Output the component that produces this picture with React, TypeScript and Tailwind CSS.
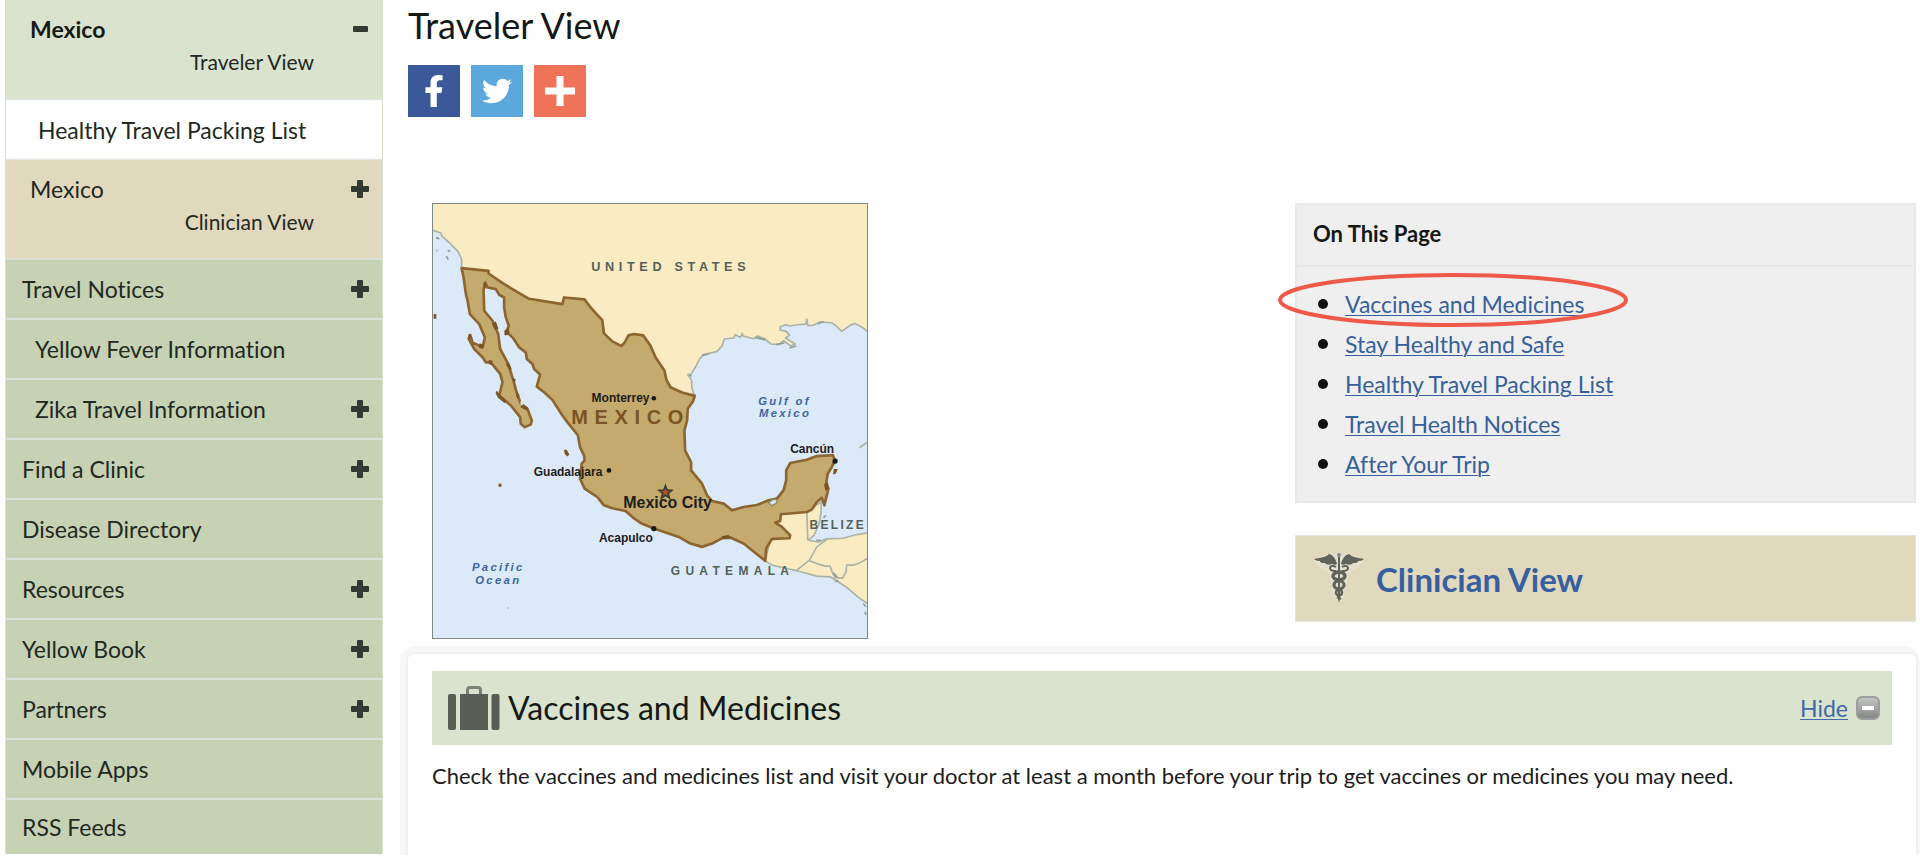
import React from "react";
import { FaFacebookF, FaTwitter } from "react-icons/fa";

type NavItem = { label: string; nested?: boolean; expandable?: boolean };

const navItems: NavItem[] = [
  { label: "Travel Notices", expandable: true },
  { label: "Yellow Fever Information", nested: true },
  { label: "Zika Travel Information", nested: true, expandable: true },
  { label: "Find a Clinic", expandable: true },
  { label: "Disease Directory" },
  { label: "Resources", expandable: true },
  { label: "Yellow Book", expandable: true },
  { label: "Partners", expandable: true },
  { label: "Mobile Apps" },
  { label: "RSS Feeds" },
];

const pageLinks = [
  "Vaccines and Medicines",
  "Stay Healthy and Safe",
  "Healthy Travel Packing List",
  "Travel Health Notices",
  "After Your Trip",
];

function ToggleButton({ open, label }: { open?: boolean; label: string }) {
  return (
    <button type="button" aria-label={`${open ? "Collapse" : "Expand"} ${label}`} className="flex size-5 items-center justify-center">
      <svg viewBox="0 0 18 18" className="size-[18px] fill-[#333a33]" aria-hidden="true">
        {open ? <rect x="2" y="6" width="15" height="6" rx="1" /> : <path d="M6 1q0-1 1-1h4q1 0 1 1v5h5q1 0 1 1v4q0 1-1 1h-5v5q0 1-1 1H7q-1 0-1-1v-5H1q-1 0-1-1V7q0-1 1-1h5z" />}
      </svg>
    </button>
  );
}

function CountryItem({ view, active }: { view: string; active?: boolean }) {
  return (
    <li className={active ? "h-[100px] border-b border-[#dfe3e0] bg-[#dae3ce] pt-3 pr-3 pl-6" : "h-[100px] border-b-2 border-[#dde2d8] bg-[#e1d9bd] pt-3 pr-3 pl-6"}>
      <div className="flex items-center justify-between">
        <a href="#mexico" className={active ? "font-bold text-[#151a15]" : ""}>Mexico</a>
        <ToggleButton open={active} label={`Mexico ${view}`} />
      </div>
      <a href="#view" className="block pr-14 text-right text-[21px] leading-8">{view}</a>
    </li>
  );
}

function Sidebar() {
  return (
    <nav aria-label="Destinations" className="w-[378px] shrink-0 text-[23px] leading-[34px] text-[#222822]">
      <ul className="border-x border-[#d9e1d0]">
        <CountryItem view="Traveler View" active />
        <li className="flex h-[60px] items-center border-b border-[#dfe3d8] bg-white pl-8">
          <a href="#packing">Healthy Travel Packing List</a>
        </li>
        <CountryItem view="Clinician View" />
        {navItems.map((item, i) => (
          <li
            key={item.label}
            className={`flex items-center justify-between bg-[#c6d2b3] pr-3 ${item.nested ? "pl-[29px]" : "pl-4"} ${i === navItems.length - 1 ? "h-[54px]" : "h-[60px] border-b-2 border-[#dce1d8]"}`}
          >
            <a href="#section">{item.label}</a>
            {item.expandable && <ToggleButton label={item.label} />}
          </li>
        ))}
      </ul>
    </nav>
  );
}

function MexicoMap() {
  return (
    <svg viewBox="36 39 1305 1305" role="img" aria-label="Map of Mexico" className="size-[436px] shrink-0 border border-[#7d8a85] bg-[#dbe9f8] font-['Liberation_Sans',sans-serif] font-bold">
      <g stroke="#a9b3a6" strokeWidth="5" strokeLinejoin="round" fill="#fbebc2">
        <path d="M30 30H1350V428L1330 412 1305 398 1290 404 1265 422 1248 405 1235 396 1200 394 1180 403 1163 405 1160 385 1157 400 1130 402 1108 406 1096 402 1080 408 1080 418 1098 422 1108 434 1096 442 1125 460 1112 466 1090 450 1075 462 1052 460 1035 445 1012 436 1000 444 968 436 966 428 960 440 945 432 940 442 912 445 905 466 890 482 850 492 838 505 825 530 812 550 802 552 814 570 814 590 822 616 738 605 602 485 470 370 325 330 250 288 203 246 122 232 122 205 112 183 85 155 62 135 60 126 30 116Z" />
        <path d="M1035 1112 1050 1050 1100 1040 1065 997 1082 970 1160 962 1203 935 1203 965 1197 1000 1182 1035 1165 1050 1195 1056 1220 1046 1270 1044 1310 1033 1345 1028V1242L1315 1222 1280 1192 1250 1172 1230 1160 1190 1158 1130 1142 1100 1135 1055 1125Z" />
        <path d="M1160 965 1163 1050M1220 1048 1190 1070 1168 1110 1130 1140M1168 1112 1195 1122 1215 1128 1230 1128 1238 1150 1245 1162 1268 1164 1278 1145 1280 1125 1300 1125 1320 1118 1341 1105M1318 772 1341 756" fill="none" />
      </g>
      <g fill="none" stroke="#8f9f94" strokeWidth="5">
        <path d="M1005 440l30 8M1068 461l25-4M1128 466l-20 6M1192 400l18-8M845 494l20-4M806 553l8 4M1240 1148l12 14M1245 1175l10-5M1210 983l8-8M1188 1050l14 0" />
        <path d="M45 140l10 3M80 178l8 4M76 196l6 10M46 178l3 2M1330 1240l8 10M1335 1265l3 10" />
      </g>
      <path
        d="M122 232 203 240 203 248 250 280 290 304 325 324 425 340 430 320 492 326 510 350 528 370 545 388 550 428 575 452 602 466 612 456 624 434 640 430 668 434 690 465 705 500 732 540 738 568 750 590 785 606 823 616 818 632 802 655 800 690 792 720 794 780 812 815 812 840 845 880 860 915 875 932 910 940 935 960 970 950 1010 944 1045 930 1070 925 1090 900 1098 870 1098 840 1110 818 1160 808 1190 797 1238 794 1245 810 1235 830 1223 850 1218 880 1225 895 1213 945 1205 922 1190 935 1175 958 1160 965 1082 972 1080 992 1065 997 1085 1010 1110 1035 1108 1044 1055 1046 1038 1075 1035 1112 1010 1092 970 1060 930 1042 905 1044 875 1060 845 1070 810 1060 775 1040 740 1028 700 1015 660 998 640 984 615 962 575 954 550 945 530 920 492 895 478 865 483 820 492 810 490 795 478 770 472 735 440 695 425 675 395 628 370 605 348 588 358 552 340 535 335 520 318 505 315 485 295 470 275 440 262 428 254 430 264 405 255 380 250 350 250 320 235 312 225 295 200 290 193 275 188 300 190 360 215 390 232 430 238 475 262 520 278 570 286 600 300 640 320 655 333 690 330 702 312 710 300 700 298 680 270 645 235 615 245 575 238 550 210 515 195 515 185 500 160 475 143 444 148 433 155 455 185 470 192 440 175 400 147 370 140 330 135 310 128 260Z"
        fill="#c5aa6d"
        stroke="#8c6530"
        strokeWidth="8"
        strokeLinejoin="round"
      />
      <path d="M1045 937l12-9h14l-2 10-14 8z" fill="#dbe9f8" stroke="#8f8a60" strokeWidth="4" />
      <g fill="#7b5425">
        <path d="M213 398l12-6 8 22-12 2zM250 420l14-10 2 18-12 6zM186 276l12 4-4 14zM176 458l12 4-2 12-12-2zM142 432l8-3 2 14-8 2zM255 520l10-2 8 18-8 2zM288 602l8 12-4 12-6-8zM298 650l10-8 14 10-4 8zM430 778l8 0 8 14-6 6-8-8zM228 600l8 12 20 18-4 8-20-16-8-14zM1241 836l12 0-6 14-8 2zM1212 882l12-6 2 18-10 8zM904 1038l20-4 10 8-26 4zM273 562l12 4-4 12zM204 508l12 2-4 14-8-4z" />
        <rect x="233" y="880" width="9" height="9" />
        <rect x="38" y="370" width="8" height="14" />
      </g>
      <rect x="299" y="632" width="7" height="12" fill="#dbe9f8" />
      <circle cx="262" cy="1254" r="3" fill="#b4c0bd" />
      <g fill="#171b17">
        <circle cx="700" cy="623" r="7" />
        <circle cx="565" cy="840" r="7" />
        <circle cx="700" cy="1015" r="8" />
        <circle cx="1245" cy="812" r="8" />
      </g>
      <path d="M735 886l5 13 14 1-11 9 4 14-12-8-12 8 4-14-11-9 14-1z" fill="#b5522b" stroke="#383b30" strokeWidth="5" />
      <g fill="#536258" className="text-[36px]">
        <text x="512" y="241" className="text-[38px] tracking-[14px]">UNITED STATES</text>
        <text x="751" y="1155" className="tracking-[16px]">GUATEMALA</text>
        <text x="1168" y="1015" className="tracking-[7px]">BELIZE</text>
      </g>
      <text x="452" y="700" fill="#7a5425" className="text-[60px] tracking-[20px]">MEXICO</text>
      <g fill="#1b201b" className="text-[36px]">
        <text x="513" y="635">Monterrey</text>
        <text x="339" y="858">Guadalajara</text>
        <text x="535" y="1056">Acapulco</text>
        <text x="1110" y="788">Cancún</text>
        <text x="608" y="952" className="text-[48px]">Mexico City</text>
      </g>
      <g fill="#3c659f" className="text-[34px] italic">
        <text x="1014" y="643" className="tracking-[7px]">Gulf of</text>
        <text x="1016" y="681" className="tracking-[7px]">Mexico</text>
        <text x="153" y="1144" className="tracking-[7px]">Pacific</text>
        <text x="163" y="1182" className="tracking-[7px]">Ocean</text>
      </g>
    </svg>
  );
}

function Caduceus() {
  return (
    <svg viewBox="0 0 52 52" className="size-[52px]" aria-hidden="true">
      <path d="M26 51l-4-6-3-12-3-13-8-5-8-8 12-5 6-2 8 3 8-3 6 2 12 5-8 8-8 5-3 13-3 12z" fill="#e8e6db" opacity=".55" />
      <g fill="#5f6359">
        <path d="M24 11C23 6 20 2 16 1 13 4 7 5 1 6c2 2 5 2 6 2 0 2 3 2 5 2 1 2 5 2 7 1 2 1 4 1 5 0zM28 11C29 6 32 2 36 1 39 4 45 5 51 6c-2 2-5 2-6 2 0 2-3 2-5 2-1 2-5 2-7 1-2 1-4 1-5 0z" />
        <path d="M25 2h2v44l-1 4-1-4z" />
      </g>
      <circle cx="26" cy="2" r="2" fill="#858b90" />
      <g fill="none" stroke="#5f6359">
        <path d="M23 18c-4 0-6-1-6-3s3-3 6-1M29 18c4 0 6-1 6-3s-3-3-6-1" strokeWidth="2" />
        <ellipse cx="26" cy="23" rx="6" ry="4" strokeWidth="3.500" />
        <ellipse cx="26" cy="32" rx="5" ry="4" strokeWidth="3.200" />
        <ellipse cx="26" cy="39.500" rx="3" ry="3" strokeWidth="2.600" />
        <path d="M24 44l4 2" strokeWidth="2.400" />
      </g>
    </svg>
  );
}

function Luggage() {
  return (
    <svg viewBox="0 0 52 44" className="h-11 w-[52px]" aria-hidden="true">
      <path d="M19.500 9V4q0-2.500 2.500-2.500h8q2.500 0 2.500 2.500v5" fill="none" stroke="#7b8076" strokeWidth="3" />
      <g fill="#5a5d56">
        <rect x="0" y="8" width="8" height="36" rx="2" />
        <rect x="12" y="8" width="28" height="36" />
        <rect x="43.500" y="8" width="8" height="36" rx="2" />
      </g>
    </svg>
  );
}

function OnThisPage() {
  return (
    <section className="border-2 border-[#e9e9e9] bg-[#efefef] text-[23px]">
      <h2 className="border-b-2 border-[#e7e7e7] px-4 pt-[11px] pb-[13px] text-[22px] font-bold leading-9 text-[#151915]">On This Page</h2>
      <ul className="flex flex-col pt-[17px] pb-[17px] leading-10">
        {pageLinks.map((text, i) => (
          <li key={text} className="relative flex items-center gap-[17px] pl-[21px]">
            <span className="size-2.5 rounded-full bg-[#111]" />
            <a href="#topic" className="text-[#375f9c] underline decoration-1 underline-offset-2">{text}</a>
            {i === 0 && (
              <svg viewBox="0 0 352 56" className="pointer-events-none absolute -top-3 -left-5 h-14 w-[352px]" aria-hidden="true">
                <ellipse cx="176" cy="28" rx="173" ry="25" fill="none" stroke="#ee5a47" strokeWidth="4" />
              </svg>
            )}
          </li>
        ))}
      </ul>
    </section>
  );
}

export default function App() {
  return (
    <div className="flex bg-[#fefefe] pl-[5px] font-['Lato',sans-serif] text-[#1c201c] [font-variant-ligatures:none]">
      <Sidebar />
      <main className="ml-[17px] flex min-w-0 flex-1 flex-col">
        <header className="pl-2">
          <h1 className="pt-[3px] text-4xl leading-[44px] text-[#151915]">Traveler View</h1>
          <div className="mt-[18px] flex gap-[11px] text-white">
            <a href="#facebook" aria-label="Share on Facebook" className="flex size-[52px] items-center justify-center bg-[#3b5998]">
              <FaFacebookF className="size-8" />
            </a>
            <a href="#twitter" aria-label="Share on Twitter" className="flex size-[52px] items-center justify-center bg-[#5aa8dc]">
              <FaTwitter className="size-[30px]" />
            </a>
            <a href="#more" aria-label="More sharing options" className="flex size-[52px] items-center justify-center bg-[#ee7359]">
              <svg viewBox="0 0 30 30" className="size-[30px] fill-white" aria-hidden="true">
                <path d="M11.500 0h7v11.500H30v7H18.500V30h-7V18.500H0v-7h11.500z" />
              </svg>
            </a>
          </div>
        </header>

        <div className="mt-[86px] flex items-start justify-between pr-1 pl-8">
          <MexicoMap />
          <div className="flex w-[621px] flex-col gap-8">
            <OnThisPage />
            <a href="#clinician" className="flex h-[87px] items-center gap-[11px] border border-[#e6e5dc] bg-[#e1d9bd] pl-[17px] text-[33px] font-bold leading-10 text-[#375f9f]">
              <Caduceus />
              Clinician View
            </a>
          </div>
        </div>

        <section className="mt-[7px] h-[209px] rounded-t-2xl border-t-[6px] border-r-2 border-l-[6px] border-[#f7f7f7]">
          <div className="h-full rounded-t-lg border-x-2 border-t-2 border-[#f1f1f1] bg-[#fefefe] pt-[17px] pr-6 pl-6">
            <div className="flex h-[74px] items-center justify-between bg-[#dae3ce] pr-3 pl-4">
              <div className="flex items-center gap-2">
                <Luggage />
                <h2 className="text-[32px] leading-10 text-[#151915]">Vaccines and Medicines</h2>
              </div>
              <div className="flex items-center gap-2">
                <a href="#hide" className="text-[23px] leading-8 text-[#4069a8] underline decoration-1 underline-offset-2">Hide</a>
                <button type="button" aria-label="Hide section" className="flex size-6 items-center justify-center rounded-md border-2 border-[#9b9e9c] bg-linear-to-b from-[#c3c6c5] to-[#858886]">
                  <span className="h-1 w-3 bg-white" />
                </button>
              </div>
            </div>
            <p className="pt-[15px] text-[22px] leading-8">
              Check the vaccines and medicines list and visit your doctor at least a month before your trip to get vaccines or medicines you may need.
            </p>
          </div>
        </section>
      </main>
    </div>
  );
}
